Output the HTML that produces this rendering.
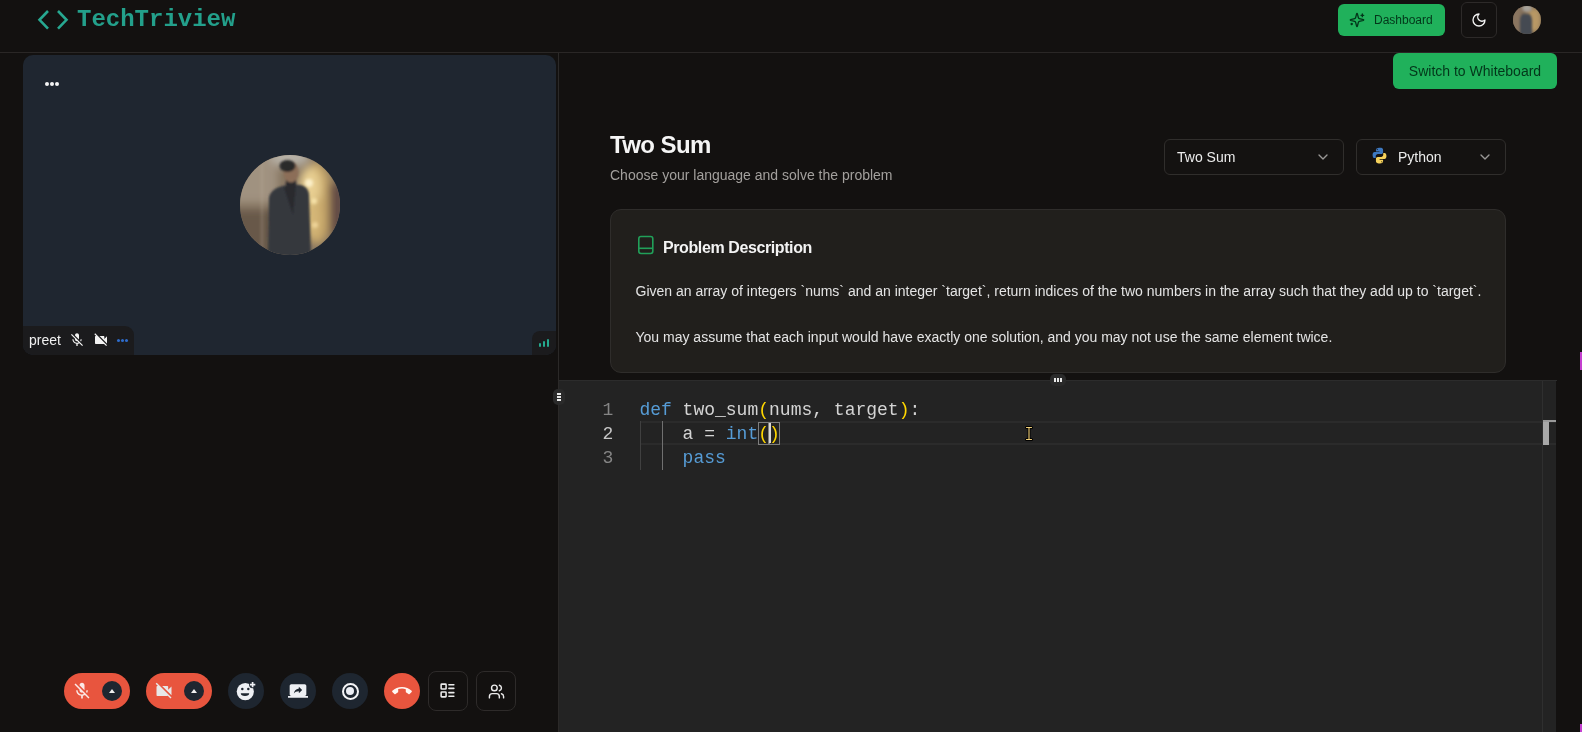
<!DOCTYPE html>
<html><head><meta charset="utf-8">
<style>
*{box-sizing:border-box;margin:0;padding:0}
html,body{width:1582px;height:732px;overflow:hidden;background:#131110;font-family:"Liberation Sans",sans-serif;color:#f2f2f2}
.abs{position:absolute}
#hdr{position:absolute;left:0;top:0;width:1582px;height:53px;border-bottom:1px solid #2a2726}
#logo-txt{position:absolute;left:77px;top:6px;font:bold 24px/28px "Liberation Mono",monospace;color:#23a08b}
.gbtn{position:absolute;background:#20b15b;color:#03361a;border-radius:6px}
#divider{position:absolute;left:558px;top:53px;width:1px;height:679px;background:#2b2928}
#tile{position:absolute;left:23px;top:55px;width:533px;height:300px;background:#1f2630;border-radius:10px;overflow:hidden}
#editor{position:absolute;left:559px;top:381px;width:997px;height:351px;background:#232323}
.code{position:absolute;font:18px/24px "Liberation Mono",monospace;white-space:pre;color:#d4d4d4}
.card{position:absolute;left:610px;top:209px;width:896px;height:164px;background:#211f1c;border:1px solid #2f2d2b;border-radius:11px}
.sel{position:absolute;top:139px;height:36px;border:1px solid #302e2c;border-radius:6px;background:#141211;font-size:14px;color:#ececec}
.rbtn{position:absolute;top:671px;width:36px;height:40px}
</style></head><body><div id="root" style="position:absolute;left:0;top:0;width:1582px;height:732px;will-change:transform">
<div id="hdr">
  <svg class="abs" style="left:0;top:0" width="80" height="40" viewBox="0 0 80 40"><path d="M48 11 39.5 19.8 48 28.6M58 11l8.5 8.8L58 28.6" fill="none" stroke="#27a891" stroke-width="2.6" stroke-linecap="butt" stroke-linejoin="miter"/></svg>
  <div id="logo-txt">TechTriview</div>
  <div class="gbtn" style="left:1338px;top:4px;width:107px;height:32px;font-size:12px;line-height:32px;padding-left:36px">
    <svg class="abs" style="left:11px;top:8px" width="16" height="16" viewBox="0 0 24 24" fill="none" stroke="#03361a" stroke-width="2" stroke-linecap="round" stroke-linejoin="round"><path d="M9.937 15.5A2 2 0 0 0 8.5 14.063l-6.135-1.582a.5.5 0 0 1 0-.962L8.5 9.936A2 2 0 0 0 9.937 8.5l1.582-6.135a.5.5 0 0 1 .963 0L14.063 8.5A2 2 0 0 0 15.5 9.937l6.135 1.581a.5.5 0 0 1 0 .964L15.5 14.063a2 2 0 0 0-1.437 1.437l-1.582 6.135a.5.5 0 0 1-.963 0z"/><path d="M20 3v4"/><path d="M22 5h-4"/><path d="M4 17v2"/><path d="M5 18H3"/></svg>Dashboard</div>
  <div class="abs" style="left:1461px;top:2px;width:36px;height:36px;border:1px solid #2d2a29;border-radius:6px">
    <svg class="abs" style="left:9px;top:9px" width="16" height="16" viewBox="0 0 24 24" fill="none" stroke="#f4f4f4" stroke-width="2" stroke-linecap="round" stroke-linejoin="round"><path d="M12 3a6 6 0 0 0 9 9 9 9 0 1 1-9-9Z"/></svg>
  </div>
  <div class="abs" style="left:1513px;top:6px;width:28px;height:28px;border-radius:50%;overflow:hidden;background:#7a6853;transform:translateZ(0)">
    <div class="abs" style="left:-3px;top:0;width:12px;height:28px;background:#8a7560;filter:blur(2px)"></div>
    <div class="abs" style="left:14px;top:2px;width:14px;height:24px;border-radius:40%;background:#b89865;filter:blur(2px)"></div>
    <div class="abs" style="left:9px;top:-2px;width:10px;height:8px;border-radius:50%;background:#a8a49c;filter:blur(1.5px)"></div>
    <div class="abs" style="left:7px;top:8px;width:12px;height:22px;border-radius:30% 30% 0 0;background:#454a52;filter:blur(1px)"></div>
  </div>
</div>
<div id="divider"></div>
<!-- video tile -->
<div id="tile">
  <div class="abs" style="left:22px;top:27px;width:4px;height:4px;border-radius:50%;background:#f4f4f4"></div>
  <div class="abs" style="left:27px;top:27px;width:4px;height:4px;border-radius:50%;background:#f4f4f4"></div>
  <div class="abs" style="left:32px;top:27px;width:4px;height:4px;border-radius:50%;background:#f4f4f4"></div>
  <svg id="face" class="abs" style="left:217px;top:100px" width="100" height="100" viewBox="0 0 100 100">
    <defs><clipPath id="cc"><circle cx="50" cy="50" r="50"/></clipPath>
    <filter id="b4" x="-50%" y="-50%" width="200%" height="200%"><feGaussianBlur stdDeviation="4"/></filter>
    <filter id="b2" x="-50%" y="-50%" width="200%" height="200%"><feGaussianBlur stdDeviation="1.8"/></filter>
    <filter id="b1" x="-50%" y="-50%" width="200%" height="200%"><feGaussianBlur stdDeviation="0.9"/></filter></defs>
    <g clip-path="url(#cc)">
      <rect width="100" height="100" fill="#85745f"/>
      <g filter="url(#b4)">
        <rect x="-10" y="-10" width="48" height="58" fill="#a09280"/>
        <rect x="-10" y="55" width="44" height="60" fill="#67584a"/>
        <ellipse cx="50" cy="2" rx="20" ry="10" fill="#b6b0a6"/>
        <ellipse cx="77" cy="48" rx="16" ry="42" fill="#c4a468"/>
        <ellipse cx="70" cy="32" rx="11" ry="20" fill="#e8cf92"/>
        <ellipse cx="73" cy="64" rx="7" ry="20" fill="#d6b878"/>
        <rect x="89" y="28" width="16" height="52" fill="#614a45"/>
      </g>
      <g filter="url(#b2)">
        <circle cx="69" cy="28" r="4" fill="#fbefc8"/>
        <circle cx="74" cy="46" r="3" fill="#f6e2a8"/>
        <circle cx="75" cy="70" r="3" fill="#eed498"/>
        <path d="M22 8v88" stroke="#bfb09a" stroke-width="1.5" opacity=".45"/>
      </g>
      <g filter="url(#b1)">
        <path d="M28 102 L29 42 Q31 35 39 32 L50 29 L61 30 Q68 32 69 39 L71 102 Z" fill="#34373d"/>
        <path d="M44 33 L50 29 L56 31 L53 60 Z" fill="#2a2b2f"/>
        <rect x="46" y="22" width="10" height="10" fill="#2a2b2f"/>
        <ellipse cx="51" cy="17" rx="7.5" ry="10.5" fill="#8c6e58"/>
        <ellipse cx="47.5" cy="11" rx="8" ry="6" fill="#29292b"/>
      </g>
    </g>
  </svg>
  <div class="abs" style="left:0;top:271px;width:111px;height:29px;background:#1b1b1d;border-radius:0 9px 0 10px"></div>
  <div class="abs" style="left:6px;top:275px;font:14px/20px 'Liberation Sans';color:#f0f0f0">preet</div>
  <svg class="abs" style="left:46px;top:277px" width="16" height="16" viewBox="0 0 24 24"><path fill="#f2f2f2" d="M19 11h-1.7c0 .74-.16 1.43-.43 2.05l1.23 1.23c.56-.98.9-2.09.9-3.28zm-4.02.17c0-.06.02-.11.02-.17V5c0-1.66-1.34-3-3-3S9 3.34 9 5v.18l5.98 5.99zM4.270 3L3 4.27l6.01 6.01V11c0 1.66 1.33 3 2.99 3 .22 0 .44-.03.65-.08l1.66 1.66c-.71.33-1.5.52-2.31.52-2.76 0-5.3-2.1-5.3-5.1H5c0 3.41 2.72 6.23 6 6.72V21h2v-3.28c.91-.13 1.77-.45 2.54-.9L19.73 21 21 19.73 4.27 3z"/></svg>
  <svg class="abs" style="left:70px;top:277px" width="16" height="16" viewBox="0 0 24 24"><path fill="#f2f2f2" d="M21 6.5l-4 4V7c0-.55-.45-1-1-1H9.82L21 17.18V6.5zM3.27 2L2 3.27 4.73 6H4c-.55 0-1 .45-1 1v10c0 .55.45 1 1 1h12c.21 0 .39-.08.54-.18L19.73 21 21 19.73 3.27 2z"/></svg>
  <div class="abs" style="left:94px;top:284px;width:3.2px;height:3.2px;border-radius:50%;background:#2e6ccc"></div>
  <div class="abs" style="left:98px;top:284px;width:3.2px;height:3.2px;border-radius:50%;background:#2e6ccc"></div>
  <div class="abs" style="left:102px;top:284px;width:3.2px;height:3.2px;border-radius:50%;background:#2e6ccc"></div>
  <div class="abs" style="left:509px;top:276px;width:24px;height:24px;background:#1b1b1d;border-radius:8px 0 10px 0"></div>
  <div class="abs" style="left:515.5px;top:288px;width:2.6px;height:4px;border-radius:1.3px;background:#24a98e"></div>
  <div class="abs" style="left:519.6px;top:285.5px;width:2.6px;height:6.5px;border-radius:1.3px;background:#24a98e"></div>
  <div class="abs" style="left:523.5px;top:283.5px;width:2.6px;height:8.5px;border-radius:1.3px;background:#24a98e"></div>
</div>
<!-- bottom controls -->
<div class="abs pill" style="left:64px;top:673px;width:66px;height:36px;border-radius:18px;background:#e8553e">
  <svg class="abs" style="left:8px;top:8px" width="20" height="20" viewBox="0 0 24 24"><path fill="#fbe9e6" d="M19 11h-1.7c0 .74-.16 1.43-.43 2.05l1.23 1.23c.56-.98.9-2.09.9-3.28zm-4.02.17c0-.06.02-.11.02-.17V5c0-1.660-1.34-3-3-3S9 3.34 9 5v.18l5.98 5.99zM4.27 3L3 4.27l6.01 6.01V11c0 1.66 1.33 3 2.99 3 .22 0 .44-.03.65-.08l1.66 1.66c-.71.33-1.5.52-2.31.52-2.76 0-5.3-2.1-5.3-5.1H5c0 3.41 2.72 6.23 6 6.72V21h2v-3.28c.91-.13 1.77-.45 2.54-.9L19.73 21 21 19.73 4.27 3z"/></svg>
  <div class="abs" style="left:38px;top:8px;width:20px;height:20px;border-radius:50%;background:#1e2630"><div class="abs" style="left:7px;top:8px;width:0;height:0;border-left:3.2px solid transparent;border-right:3.2px solid transparent;border-bottom:4px solid #f0f0f0"></div></div>
</div>
<div class="abs pill" style="left:146px;top:673px;width:66px;height:36px;border-radius:18px;background:#e8553e">
  <svg class="abs" style="left:8px;top:8px" width="20" height="20" viewBox="0 0 24 24"><path fill="#e8e8e8" d="M21 6.5l-4 4V7c0-.55-.45-1-1-1H9.82L21 17.18V6.5zM3.27 2L2 3.27 4.73 6H4c-.55 0-1 .45-1 1v10c0 .55.45 1 1 1h12c.21 0 .39-.08.54-.18L19.73 21 21 19.73 3.27 2z"/></svg>
  <div class="abs" style="left:38px;top:8px;width:20px;height:20px;border-radius:50%;background:#1e2630"><div class="abs" style="left:7px;top:8px;width:0;height:0;border-left:3.2px solid transparent;border-right:3.2px solid transparent;border-bottom:4px solid #f0f0f0"></div></div>
</div>
<div class="abs" style="left:228px;top:673px;width:36px;height:36px;border-radius:50%;background:#1e2630">
  <svg class="abs" style="left:0;top:0" width="36" height="36" viewBox="0 0 36 36"><circle cx="17.3" cy="18.6" r="8.6" fill="#eef0f4"/><circle cx="24.6" cy="11.6" r="3.6" fill="#1e2630"/><circle cx="14.3" cy="16" r="1.25" fill="#1e2630"/><circle cx="20.3" cy="16" r="1.25" fill="#1e2630"/><path d="M12.8 20.3h8.4a4.2 2.6 0 0 1-8.4 0z" fill="#1e2630"/><path d="M24.6 8.9v5.4M21.9 11.6h5.4" stroke="#eef0f4" stroke-width="1.7"/></svg>
</div>
<div class="abs" style="left:280px;top:673px;width:36px;height:36px;border-radius:50%;background:#1e2630">
  <svg class="abs" style="left:8px;top:8px" width="20" height="20" viewBox="0 0 24 24"><path fill="#eef0f4" d="M20 18c1.1 0 1.99-.9 1.99-2L22 6c0-1.11-.9-2-2-2H4c-1.11 0-2 .89-2 2v10c0 1.1.89 2 2 2H0v2h24v-2h-4zm-7-3.53v-2.19c-2.78 0-4.61.85-6 2.72.56-2.67 2.11-5.33 6-5.87V7l4 3.73-3.3 3.3z"/></svg>
</div>
<div class="abs" style="left:332px;top:673px;width:36px;height:36px;border-radius:50%;background:#1e2630">
  <div class="abs" style="left:9.6px;top:9.8px;width:17px;height:17px;border-radius:50%;border:2px solid #f4f4f6"></div>
  <div class="abs" style="left:13.8px;top:13.8px;width:8.5px;height:8.5px;border-radius:50%;background:#eceef4"></div>
</div>
<div class="abs" style="left:384px;top:673px;width:36px;height:36px;border-radius:50%;background:#e8553e">
  <svg class="abs" style="left:7px;top:7px" width="22" height="22" viewBox="0 0 24 24"><path fill="#fff8f4" d="M12 9c-1.6 0-3.15.25-4.6.72v3.1c0 .39-.23.74-.56.9-.98.49-1.87 1.12-2.66 1.85-.18.18-.43.28-.7.28-.28 0-.53-.11-.71-.29L.29 13.08c-.18-.17-.29-.42-.29-.7 0-.28.11-.53.29-.71C3.34 8.78 7.46 7 12 7s8.66 1.78 11.71 4.67c.18.18.29.43.29.71 0 .28-.11.53-.29.71l-2.48 2.48c-.18.18-.43.29-.71.29-.27 0-.52-.11-.7-.28-.79-.74-1.69-1.36-2.67-1.85-.33-.16-.56-.5-.56-.9v-3.1C15.15 9.25 13.6 9 12 9z" transform="translate(12 12) scale(0.9) translate(-12 -12)"/></svg>
</div>
<div class="abs" style="left:428px;top:671px;width:40px;height:40px;border:1.5px solid #2e2b2a;border-radius:8px">
  <svg class="abs" style="left:10px;top:10px" width="17" height="17" viewBox="0 0 24 24" fill="none" stroke="#ececec" stroke-width="2.2" stroke-linecap="round" stroke-linejoin="round"><rect width="7" height="7" x="3" y="3" rx="1"/><rect width="7" height="7" x="3" y="14" rx="1"/><path d="M14 4h7"/><path d="M14 9h7"/><path d="M14 15h7"/><path d="M14 20h7"/></svg>
</div>
<div class="abs" style="left:476px;top:671px;width:40px;height:40px;border:1.5px solid #2e2b2a;border-radius:8px">
  <svg class="abs" style="left:10.5px;top:11px" width="17" height="17" viewBox="0 0 24 24" fill="none" stroke="#ececec" stroke-width="2" stroke-linecap="round" stroke-linejoin="round"><path d="M16 21v-2a4 4 0 0 0-4-4H6a4 4 0 0 0-4 4v2"/><circle cx="9" cy="7" r="4"/><path d="M22 21v-2a4 4 0 0 0-3-3.87"/><path d="M16 3.13a4 4 0 0 1 0 7.75"/></svg>
</div>

<!-- right panel -->
<div class="gbtn" style="left:1393px;top:53px;width:164px;height:36px;font-size:14px;line-height:36px;text-align:center">Switch to Whiteboard</div>
<div class="abs" style="left:610px;top:129px;font:bold 24px/32px 'Liberation Sans';letter-spacing:-0.6px;color:#f5f5f5">Two Sum</div>
<div class="abs" style="left:610px;top:165px;font:14px/20px 'Liberation Sans';color:#a3a09d">Choose your language and solve the problem</div>
<div class="sel" style="left:1164px;width:180px">
  <div class="abs" style="left:12px;top:7px;line-height:20px">Two Sum</div>
  <svg class="abs" style="left:150px;top:9px" width="16" height="16" viewBox="0 0 24 24" fill="none" stroke="#9a9896" stroke-width="2" stroke-linecap="round" stroke-linejoin="round"><path d="m6 9 6 6 6-6"/></svg>
</div>
<div class="sel" style="left:1356px;width:150px">
  <svg class="abs" style="left:14.5px;top:7px" width="15" height="17" viewBox="0 0 16 18"><path fill="#3d78c0" d="M7.8 0.6c-3 0-3.6 1.3-3.6 2.3v1.7h3.7v.6H2.7C1.5 5.2.6 6.3.6 8.4s.9 3.3 2 3.3h1.4V9.8c0-1.2 1-2.3 2.3-2.3h3.6c1 0 1.9-.9 1.9-1.9V2.9c0-1-.8-1.9-2-2.1C9.2.7 8.5.6 7.8.6z"/><circle cx="5.6" cy="2.4" r=".6" fill="#131110"/><path fill="#f6d25c" d="M8.2 17.4c3 0 3.6-1.3 3.6-2.3v-1.700H8.1v-.6h5.2c1.200 0 2.100-1.1 2.100-3.200s-.9-3.3-2-3.3H12v1.900c0 1.2-1 2.300-2.300 2.300H6.1c-1 0-1.900.9-1.900 1.900v2.700c0 1 .8 1.900 2 2.100.6.1 1.300.2 2 .2z"/><circle cx="10.4" cy="15.6" r=".6" fill="#131110"/></svg>
  <div class="abs" style="left:41px;top:7px;line-height:20px">Python</div>
  <svg class="abs" style="left:120px;top:9px" width="16" height="16" viewBox="0 0 24 24" fill="none" stroke="#9a9896" stroke-width="2" stroke-linecap="round" stroke-linejoin="round"><path d="m6 9 6 6 6-6"/></svg>
</div>
<div class="card">
  <svg class="abs" style="left:26px;top:25px" width="17" height="20" viewBox="0 0 17 20" fill="none" stroke="#21a059" stroke-width="1.6"><rect x="1.8" y="1.5" width="14" height="17" rx="2.2"/><path d="M1.8 13.3h14"/></svg>
  <div class="abs" style="left:52px;top:28px;font:bold 16px/20px 'Liberation Sans';letter-spacing:-0.4px;color:#f3f3f3">Problem Description</div>
  <div class="abs" style="left:24.5px;top:71px;font:14px/20px 'Liberation Sans';color:#e4e4e4;white-space:nowrap">Given an array of integers `nums` and an integer `target`, return indices of the two numbers in the array such that they add up to `target`.</div>
  <div class="abs" style="left:24.5px;top:117px;font:14px/20px 'Liberation Sans';color:#e4e4e4;white-space:nowrap">You may assume that each input would have exactly one solution, and you may not use the same element twice.</div>
</div>
<div class="abs" style="left:1050px;top:374px;width:16px;height:12px;border-radius:5px;background:#2a2a2a;z-index:5">
  <div class="abs" style="left:4px;top:4px;width:2px;height:4px;background:#e8e8e8"></div>
  <div class="abs" style="left:7px;top:4px;width:2px;height:4px;background:#e8e8e8"></div>
  <div class="abs" style="left:10px;top:4px;width:2px;height:4px;background:#e8e8e8"></div>
</div>
<div id="editor">
  <div class="abs" style="left:0;top:-1px;width:998px;height:1px;background:#2c2c2c"></div>
  <!-- current line highlight -->
  <div class="abs" style="left:81px;top:40px;width:916px;height:24px;border-top:2px solid #2b2b2b;border-bottom:2px solid #2b2b2b"></div>
  <!-- overview ruler -->
  <div class="abs" style="left:983px;top:0;width:1px;height:351px;background:#2f2f2f"></div>
  <div class="abs" style="left:984px;top:39px;width:6px;height:25px;background:#a8a8a8"></div>
  <div class="abs" style="left:984px;top:39px;width:13px;height:2px;background:#9a9a9a"></div>
  <!-- indent guides -->
  <div class="abs" style="left:81px;top:40px;width:1px;height:49px;background:#404040"></div>
  <div class="abs" style="left:102.6px;top:40px;width:1px;height:49px;background:#707070"></div>
  <!-- bracket boxes -->
  <div class="abs" style="left:199px;top:40.5px;width:11px;height:23px;border:1px solid #7e7e7e"></div>
  <div class="abs" style="left:210px;top:40.5px;width:11px;height:23px;border:1px solid #7e7e7e"></div>
  <div class="abs" style="left:210px;top:42px;width:2px;height:20px;background:#d8d8d8"></div>
  <div class="code" style="left:43.5px;top:17px;color:#858585">1</div>
  <div class="code" style="left:43.5px;top:41px;color:#c6c6c6">2</div>
  <div class="code" style="left:43.5px;top:65px;color:#858585">3</div>
  <div class="code" style="left:80.4px;top:17px"><span style="color:#569cd6">def</span> two_sum<span style="color:#ffd700">(</span>nums, target<span style="color:#ffd700">)</span>:</div>
  <div class="code" style="left:80.4px;top:41px">    a = <span style="color:#569cd6">int</span><span style="color:#ffd700">()</span></div>
  <div class="code" style="left:80.4px;top:65px">    <span style="color:#569cd6">pass</span></div>
  <!-- mouse ibeam -->
  <svg class="abs" style="left:465px;top:44px" width="10" height="17" viewBox="0 0 10 17"><path d="M2.5 2.5h5M5 2.5v12M2.5 14.5h5" stroke="#000" stroke-width="3" stroke-linecap="round"/><path d="M2.5 2.5h5M5 2.5v12M2.5 14.5h5" stroke="#f4d27a" stroke-width="1.1" stroke-linecap="round"/></svg>
</div>
<div class="abs" style="left:553px;top:389px;width:12px;height:16px;border-radius:5px;background:#2a2a2a;z-index:5">
  <div class="abs" style="left:4px;top:4px;width:4px;height:2px;background:#e8e8e8"></div>
  <div class="abs" style="left:4px;top:7px;width:4px;height:2px;background:#e8e8e8"></div>
  <div class="abs" style="left:4px;top:10px;width:4px;height:2px;background:#e8e8e8"></div>
</div>
<div class="abs" style="left:1580px;top:352px;width:2px;height:18px;background:#c43fcf"></div>
<div class="abs" style="left:1580px;top:724px;width:2px;height:8px;background:#c43fcf"></div>
</div></body></html>
